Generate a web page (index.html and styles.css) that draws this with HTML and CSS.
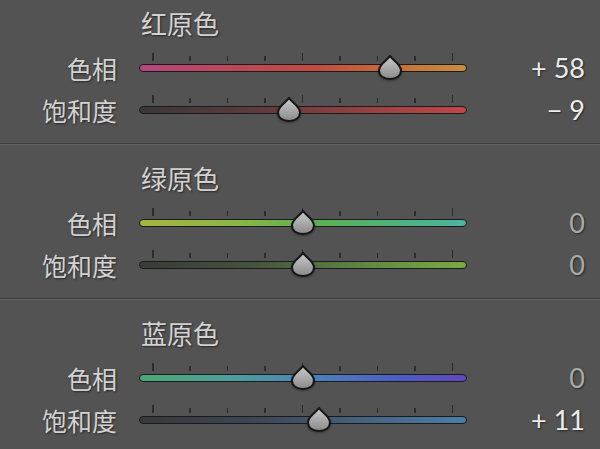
FILE: index.html
```html
<!DOCTYPE html>
<html lang="zh-CN">
<head>
    <meta charset="UTF-8">
    <meta name="viewport" content="width=device-width, initial-scale=1.0">
    <title>原色</title>
    <link rel="stylesheet" href="styles.css">
</head>
<body>
    <!-- 红原色 -->
    <section class="group first">
        <h2 class="group-title">红原色</h2>
        <div class="row">
            <span class="label">色相</span>
            <div class="slider">
                <div class="ticks"><i class="long"></i><i></i><i></i><i></i><i class="long"></i><i></i><i></i><i></i><i class="long"></i></div>
                <div class="track red-hue">
                    <div class="rail"><span class="thumb" style="left: 79%"><svg viewBox="0 0 26 26" width="26" height="26"><use href="#drop"/></svg></span></div>
                </div>
            </div>
            <span class="value on">+ 58</span>
        </div>
        <div class="row">
            <span class="label">饱和度</span>
            <div class="slider">
                <div class="ticks"><i class="long"></i><i></i><i></i><i></i><i class="long"></i><i></i><i></i><i></i><i class="long"></i></div>
                <div class="track red-sat">
                    <div class="rail"><span class="thumb" style="left: 45.5%"><svg viewBox="0 0 26 26" width="26" height="26"><use href="#drop"/></svg></span></div>
                </div>
            </div>
            <span class="value on">− 9</span>
        </div>
    </section>

    <!-- 绿原色 -->
    <section class="group">
        <h2 class="group-title">绿原色</h2>
        <div class="row">
            <span class="label">色相</span>
            <div class="slider">
                <div class="ticks"><i class="long"></i><i></i><i></i><i></i><i class="long"></i><i></i><i></i><i></i><i class="long"></i></div>
                <div class="track green-hue">
                    <div class="rail"><span class="thumb" style="left: 50%"><svg viewBox="0 0 26 26" width="26" height="26"><use href="#drop"/></svg></span></div>
                </div>
            </div>
            <span class="value">0</span>
        </div>
        <div class="row">
            <span class="label">饱和度</span>
            <div class="slider">
                <div class="ticks"><i class="long"></i><i></i><i></i><i></i><i class="long"></i><i></i><i></i><i></i><i class="long"></i></div>
                <div class="track green-sat">
                    <div class="rail"><span class="thumb" style="left: 50%"><svg viewBox="0 0 26 26" width="26" height="26"><use href="#drop"/></svg></span></div>
                </div>
            </div>
            <span class="value">0</span>
        </div>
    </section>

    <!-- 蓝原色 -->
    <section class="group">
        <h2 class="group-title">蓝原色</h2>
        <div class="row">
            <span class="label">色相</span>
            <div class="slider">
                <div class="ticks"><i class="long"></i><i></i><i></i><i></i><i class="long"></i><i></i><i></i><i></i><i class="long"></i></div>
                <div class="track blue-hue">
                    <div class="rail"><span class="thumb" style="left: 50%"><svg viewBox="0 0 26 26" width="26" height="26"><use href="#drop"/></svg></span></div>
                </div>
            </div>
            <span class="value">0</span>
        </div>
        <div class="row">
            <span class="label">饱和度</span>
            <div class="slider">
                <div class="ticks"><i class="long"></i><i></i><i></i><i></i><i class="long"></i><i></i><i></i><i></i><i class="long"></i></div>
                <div class="track blue-sat">
                    <div class="rail"><span class="thumb" style="left: 55.5%"><svg viewBox="0 0 26 26" width="26" height="26"><use href="#drop"/></svg></span></div>
                </div>
            </div>
            <span class="value on">+ 11</span>
        </div>
    </section>

    <!-- forma del deslizador -->
    <svg class="defs" width="0" height="0">
        <defs>
            <linearGradient id="dropFill" x1="0" y1="0" x2="0" y2="1">
                <stop offset="0" stop-color="#cbcbcb"/>
                <stop offset="1" stop-color="#8a8a8a"/>
            </linearGradient>
            <path id="drop" d="M13 1.5 C14.8 5 24 9.5 24 15.8 C24 21.5 19.2 24.6 13 24.6 C6.8 24.6 2 21.5 2 15.8 C2 9.5 11.2 5 13 1.5 Z" fill="url(#dropFill)" stroke="#161616" stroke-width="2" stroke-linejoin="round"/>
        </defs>
    </svg>
</body>
</html>
```

FILE: styles.css
```css
:root {
    --fondo: #535353;
    --texto: #d2d2d2;
    --sombra: 1px 1px 2px rgba(0,0,0,0.55);
}

body {
    margin: 0;
    background: var(--fondo);
    font-family: "Noto Sans CJK SC", "Noto Sans", sans-serif;
    color: var(--texto);
    overflow: hidden;
}

.group {
    padding: 17px 0 12px;
    border-bottom: 1px solid #3d3d3d;
    box-shadow: 0 1px 0 #616161;
    margin-bottom: 1px;
}

.group.first {
    padding-top: 7px;
}

.group-title {
    margin: 0 0 8px;
    padding-left: 141px;
    font-size: 26px;
    font-weight: 400;
    line-height: 32px;
    text-shadow: var(--sombra);
}

.row {
    display: grid;
    grid-template-columns: 117px 328px 1fr;
    column-gap: 22px;
    align-items: center;
    height: 42px;
    padding-right: 15px;
}

.label {
    text-align: right;
    font-size: 25px;
    line-height: 42px;
    text-shadow: var(--sombra);
}

.value {
    text-align: right;
    font-family: Lato, "Open Sans", sans-serif;
    font-size: 27px;
    line-height: 42px;
    color: #a9a9a9;
    text-shadow: var(--sombra);
}

.value.on {
    color: #ececec;
}

/* deslizador */
.slider {
    padding-bottom: 11px;
}

.ticks {
    display: flex;
    justify-content: space-between;
    align-items: flex-end;
    height: 8px;
    padding: 0 14px 0 13px;
    margin-bottom: 3px;
}

.ticks i {
    width: 1.5px;
    height: 5px;
    background: #2b2b2b;
}

.ticks i.long {
    height: 8px;
}

.track {
    position: relative;
    height: 8px;
    box-sizing: border-box;
    border: 1.5px solid #1b1b1b;
    border-radius: 4px;
}

.rail {
    position: absolute;
    left: 12.5px;
    right: 13.5px;
    top: 0;
    bottom: 0;
}

.thumb {
    position: absolute;
    top: 50%;
    width: 26px;
    height: 26px;
    transform: translate(-50%, -52%);
    filter: drop-shadow(0 1px 1px rgba(0,0,0,0.35));
}

.thumb svg {
    display: block;
}

.defs {
    position: absolute;
}

.red-hue   { background: linear-gradient(90deg, #b8477f 0%, #bd4656 30%, #c24c40 55%, #c8713c 80%, #c98e3c 100%); }
.red-sat   { background: linear-gradient(90deg, #3b3838 0%, #5c3b3b 35%, #a04242 75%, #c24747 100%); }
.green-hue { background: linear-gradient(90deg, #a6b540 0%, #8ab648 30%, #5bb052 55%, #4fb27c 80%, #4fb3a3 100%); }
.green-sat { background: linear-gradient(90deg, #393b39 0%, #44543d 35%, #649142 75%, #79ab42 100%); }
.blue-hue  { background: linear-gradient(90deg, #4ca874 0%, #4c9ea0 30%, #4a80bc 55%, #4d5cc4 80%, #6447bd 100%); }
.blue-sat  { background: linear-gradient(90deg, #38393b 0%, #3d4654 35%, #466889 75%, #4a7eab 100%); }
```
